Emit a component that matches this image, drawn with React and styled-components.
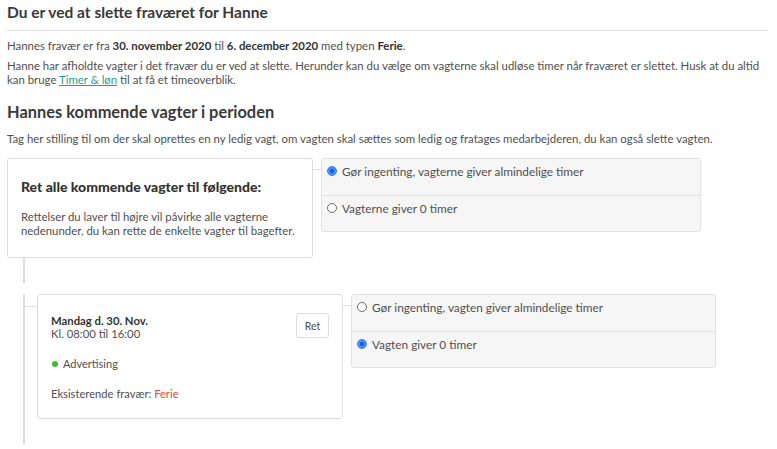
import React from "react";
import styled, { createGlobalStyle } from "styled-components";

const GlobalStyle = createGlobalStyle`
  html, body {
    margin: 0;
    padding: 0;
    background: #fff;
  }
  body {
    font-family: Lato, "Open Sans", sans-serif;
    color: #4a4a4a;
    -webkit-font-smoothing: antialiased;
  }
`;

const Page = styled.div`
  padding: 1px 10px 0 7px;
  width: 777px;
  box-sizing: border-box;
`;

const Title = styled.h1`
  margin: 0;
  font-size: 15.5px;
  font-weight: 700;
  color: #3a3a3a;
  line-height: 22px;
  padding-bottom: 7px;
  border-bottom: 1px solid #ddd;
`;

const Text = styled.p`
  margin: ${(p) => p.$mt || 0}px 0 0;
  font-size: 11.4px;
  line-height: 14px;
  color: #4f4f4f;
  b {
    color: #333;
    font-weight: 700;
  }
`;

const Link = styled.a`
  color: #2a9d8f;
  text-decoration: underline;
`;

const SubTitle = styled.h2`
  margin: 14px 0 0;
  font-size: 16.4px;
  font-weight: 700;
  color: #3a3a3a;
  line-height: 22px;
`;

const Row = styled.div`
  display: flex;
  align-items: flex-start;
  margin-top: ${(p) => p.$mt || 0}px;
`;

const Card = styled.div`
  width: ${(p) => p.$w}px;
  height: ${(p) => p.$h}px;
  box-sizing: border-box;
  border: 1px solid #ddd;
  border-radius: 3px;
  background: #fff;
  padding: ${(p) => p.$pad};
  flex-shrink: 0;
`;

const Connector = styled.div`
  width: ${(p) => p.$w}px;
  height: 1px;
  background: #ddd;
  margin-top: 11px;
  flex-shrink: 0;
`;

const CardTitle = styled.div`
  font-size: 14px;
  font-weight: 900;
  color: #333;
  line-height: 16px;
`;

const CardDesc = styled.div`
  margin-top: 15px;
  font-size: 11.4px;
  line-height: 14px;
  color: #4f4f4f;
`;

const Options = styled.div`
  width: ${(p) => p.$w}px;
  box-sizing: border-box;
  border: 1px solid #e2e2e2;
  border-radius: 3px;
  background: #f6f6f6;
`;

const Option = styled.label`
  display: flex;
  align-items: flex-start;
  gap: 5px;
  height: 36px;
  box-sizing: border-box;
  padding: 6px 5px 0;
  font-size: 11.8px;
  line-height: 13px;
  color: #4f4f4f;
  & + & {
    border-top: 1px solid #e2e2e2;
  }
`;

const Radio = styled.span`
  width: 10px;
  height: 10px;
  margin-top: 1px;
  border-radius: 50%;
  box-sizing: border-box;
  flex-shrink: 0;
  border: 1px solid ${(p) => (p.$checked ? "#2f7cf6" : "#6b6b6b")};
  background: ${(p) =>
    p.$checked
      ? "radial-gradient(circle, #1a5fd8 0 2px, #4a90f7 2.5px)"
      : "#fff"};
`;

const Stem = styled.div`
  width: 2px;
  height: 25px;
  margin-left: 16px;
  background: #ddd;
`;

const Tree = styled.div`
  margin: 11px 0 0 16px;
  border-left: 2px solid #ddd;
  padding: 0 0 25px 12px;
`;

const ShiftRow = styled(Row)`
  position: relative;
`;

const BranchLine = styled.div`
  position: absolute;
  left: -12px;
  top: 12px;
  width: 12px;
  height: 1px;
  background: #ddd;
`;

const ShiftHead = styled.div`
  display: flex;
  justify-content: space-between;
  align-items: flex-start;
`;

const ShiftDate = styled.div`
  font-size: 11.3px;
  line-height: 13px;
  color: #4f4f4f;
  b {
    color: #333;
    font-weight: 700;
  }
`;

const Button = styled.button`
  font-family: inherit;
  font-size: 10.5px;
  color: #4a4a4a;
  background: #fff;
  border: 1px solid #ddd;
  border-radius: 3px;
  width: 33px;
  height: 25px;
  padding: 0;
  margin-top: -1px;
`;

const Tag = styled.div`
  margin-top: 17px;
  display: flex;
  align-items: center;
  gap: 5px;
  font-size: 11px;
  line-height: 14px;
  color: #4f4f4f;
`;

const Dot = styled.span`
  width: 6px;
  height: 6px;
  border-radius: 50%;
  background: #44b830;
  margin-left: 1px;
`;

const Absence = styled.div`
  margin-top: 16px;
  font-size: 11.2px;
  line-height: 14px;
  color: #4f4f4f;
  span {
    color: #e4473d;
  }
`;

export default function App() {
  return (
    <Page>
      <GlobalStyle />
      <Title>Du er ved at slette fraværet for Hanne</Title>
      <Text $mt={8}>
        Hannes fravær er fra <b>30. november 2020</b> til <b>6. december 2020</b> med typen <b>Ferie</b>.
      </Text>
      <Text $mt={6}>
        Hanne har afholdte vagter i det fravær du er ved at slette. Herunder kan du vælge om vagterne skal udløse timer når fraværet er slettet. Husk at du altid kan bruge <Link href="#">Timer &amp; løn</Link> til at få et timeoverblik.
      </Text>
      <SubTitle>Hannes kommende vagter i perioden</SubTitle>
      <Text $mt={9}>
        Tag her stilling til om der skal oprettes en ny ledig vagt, om vagten skal sættes som ledig og fratages medarbejderen, du kan også slette vagten.
      </Text>

      <Row $mt={12}>
        <Card $w={306} $h={100} $pad="20px 13px 0">
          <CardTitle>Ret alle kommende vagter til følgende:</CardTitle>
          <CardDesc>
            Rettelser du laver til højre vil påvirke alle vagterne nedenunder, du kan rette de enkelte vagter til bagefter.
          </CardDesc>
        </Card>
        <Connector $w={8} />
        <Options $w={380}>
          <Option>
            <Radio $checked />
            Gør ingenting, vagterne giver almindelige timer
          </Option>
          <Option>
            <Radio />
            Vagterne giver 0 timer
          </Option>
        </Options>
      </Row>

      <Stem />

      <Tree>
        <ShiftRow>
          <BranchLine />
          <Card $w={306} $h={125} $pad="19px 13px 0">
            <ShiftHead>
              <ShiftDate>
                <b>Mandag d. 30. Nov.</b>
                <br />
                Kl. 08:00 til 16:00
              </ShiftDate>
              <Button>Ret</Button>
            </ShiftHead>
            <Tag>
              <Dot />
              Advertising
            </Tag>
            <Absence>
              Eksisterende fravær: <span>Ferie</span>
            </Absence>
          </Card>
          <Connector $w={8} />
          <Options $w={365}>
            <Option>
              <Radio />
              Gør ingenting, vagten giver almindelige timer
            </Option>
            <Option>
              <Radio $checked />
              Vagten giver 0 timer
            </Option>
          </Options>
        </ShiftRow>
      </Tree>
    </Page>
  );
}
